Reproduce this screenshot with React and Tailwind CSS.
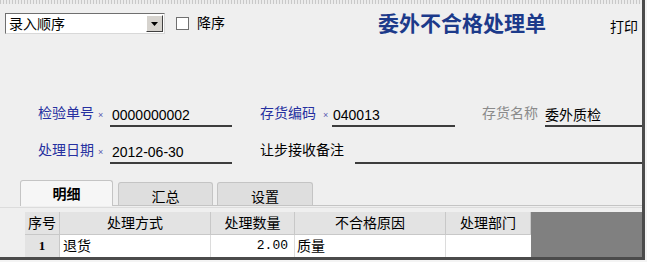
export default function App() {
  const cols = [
    { name: "序号", w: "w-[35px]" },
    { name: "处理方式", w: "w-[151px]" },
    { name: "处理数量", w: "w-[84px]" },
    { name: "不合格原因", w: "w-[151px]" },
    { name: "处理部门", w: "w-[85px]" },
  ];

  return (
    <div className="w-[647px] h-[262px] bg-[#f4f4f4] overflow-hidden font-['Liberation_Sans','Noto_Sans_CJK_SC',sans-serif] text-[14px] text-black">
      <div className="w-[645px] h-[260px] bg-[#efefef] border-r-[3px] border-b-[3px] border-[#4b4b4b] overflow-hidden">
        {/* dotted strip */}
        <div className="h-[4px] bg-[repeating-linear-gradient(90deg,#c9c9c9_0_1px,#ececec_1px_3px)]" />

        {/* top bar */}
        <div className="mt-[9px] h-[21px] flex items-center whitespace-nowrap">
          <div className="ml-[5px] w-[160px] h-[21px] flex items-center bg-white border border-t-[#6f6f6f] border-l-[#6f6f6f] border-r-[#d8d8d8] border-b-[#d8d8d8]">
            <span className="pl-[3px] flex-1 leading-none">录入顺序</span>
            <div className="w-[17px] h-[17px] mr-[1px] bg-[#d6d3ce] border border-t-white border-l-white border-r-[#404040] border-b-[#404040] flex items-center justify-center">
              <svg width="7" height="4" viewBox="0 0 7 4">
                <path d="M0 0h7L3.5 4z" fill="#000" />
              </svg>
            </div>
          </div>
          <div className="ml-[11px] w-[13px] h-[13px] bg-white border border-[#707070]" />
          <span className="ml-[8px]">降序</span>
          <span className="ml-[153px] text-[21px] font-bold text-[#1c3a8a]">委外不合格处理单</span>
          <span className="ml-[64px] pt-[8px]">打印</span>
        </div>

        {/* fields */}
        <div className="mt-[71px] h-[22px] flex items-end whitespace-nowrap">
          <span className="ml-[38px] w-[60px] text-[#2630a0] pb-[3px]">检验单号</span>
          <span className="w-[12px] text-[9px] text-[#5a5ab0] pb-[5px]">×</span>
          <div className="w-[122px] h-[22px] border-b-2 border-[#3c3c3c] flex items-center pl-[2px]">0000000002</div>
          <span className="ml-[28px] w-[63px] text-[#2630a0] pb-[3px]">存货编码</span>
          <span className="w-[9px] text-[9px] text-[#5a5ab0] pb-[5px]">×</span>
          <div className="w-[123px] h-[22px] border-b-2 border-[#3c3c3c] flex items-center pl-[1px]">040013</div>
          <span className="ml-[27px] w-[63px] text-[#8a8a8a] pb-[3px]">存货名称</span>
          <div className="flex-1 h-[22px] border-b-2 border-[#3c3c3c] flex items-center">委外质检</div>
        </div>
        <div className="mt-[15px] h-[22px] flex items-end whitespace-nowrap">
          <span className="ml-[38px] w-[60px] text-[#2630a0] pb-[3px]">处理日期</span>
          <span className="w-[12px] text-[9px] text-[#5a5ab0] pb-[5px]">×</span>
          <div className="w-[122px] h-[22px] border-b-2 border-[#3c3c3c] flex items-center pl-[2px]">2012-06-30</div>
          <span className="ml-[28px] w-[95px] pb-[3px]">让步接收备注</span>
          <div className="flex-1 h-[22px] border-b-2 border-[#3c3c3c]" />
        </div>

        {/* tabs */}
        <div className="mt-[16px] flex items-end h-[26px]">
          <div className="ml-[20px] w-[93px] h-[26px] bg-[#f6f6f6] border border-b-0 border-[#c4c4c4] rounded-t-[3px] flex justify-center pt-[3px] font-bold">明细</div>
          <div className="flex-1 flex items-end border-b border-[#c4c4c4] h-[26px]">
            <div className="ml-[5px] w-[95px] h-[23px] bg-[#dedede] border border-b-0 border-[#c4c4c4] rounded-t-[3px] flex justify-center pt-[4px]">汇总</div>
            <div className="ml-[4px] w-[96px] h-[23px] bg-[#dedede] border border-b-0 border-[#c4c4c4] rounded-t-[3px] flex justify-center pt-[4px]">设置</div>
          </div>
        </div>

        {/* table */}
        <div className="border-t border-[#dcdcdc] mt-[1px] pt-[4px] flex">
          <div className="ml-[25px] flex flex-col">
            <div className="flex h-[23px] bg-[#e3e3e3]">
              {cols.map((c) => (
                <div key={c.name} className={`${c.w} flex items-center justify-center border-r border-b border-[#c8c8c8]`}>
                  {c.name}
                </div>
              ))}
            </div>
            <div className="flex h-[22px] bg-white">
              <div className="w-[35px] bg-[#e3e3e3] border-r border-[#c8c8c8] flex items-center justify-center font-['Liberation_Serif'] font-bold text-[13px]">1</div>
              <div className="w-[151px] border-r border-[#dcdcdc] flex items-center pl-[3px]">退货</div>
              <div className="w-[84px] border-r border-[#dcdcdc] flex items-center justify-end pr-[6px] font-['Liberation_Mono'] text-[13px]">2.00</div>
              <div className="w-[151px] border-r border-[#dcdcdc] flex items-center pl-[2px]">质量</div>
              <div className="w-[85px]" />
            </div>
          </div>
          <div className="flex-1 h-[45px] bg-[#808080]" />
        </div>
      </div>
    </div>
  );
}
